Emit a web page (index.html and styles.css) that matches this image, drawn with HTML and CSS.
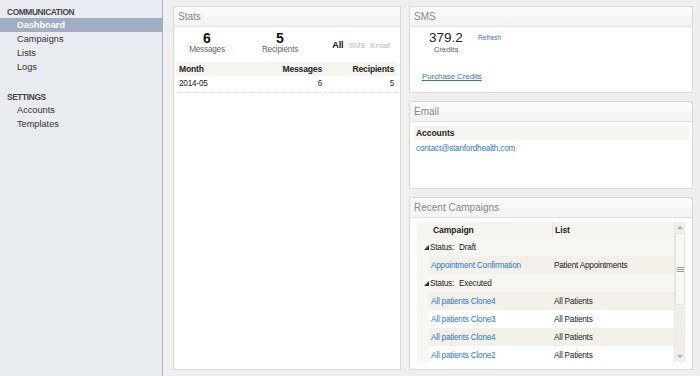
FILE: index.html
```html
<!DOCTYPE html>
<html lang="en">
<head>
    <meta charset="UTF-8">
    <title>Dashboard</title>
    <link rel="stylesheet" href="styles.css">
</head>
<body>
    <div class="app">
        <nav class="sidebar">
            <div class="nav-group">
                <div class="nav-title">Communication</div>
                <a class="nav-item active" href="#">Dashboard</a>
                <a class="nav-item" href="#">Campaigns</a>
                <a class="nav-item" href="#">Lists</a>
                <a class="nav-item" href="#">Logs</a>
            </div>
            <div class="nav-group">
                <div class="nav-title">Settings</div>
                <a class="nav-item" href="#">Accounts</a>
                <a class="nav-item" href="#">Templates</a>
            </div>
        </nav>

        <main class="main">
            <section class="panel stats">
                <div class="panel-head">Stats</div>
                <div class="stat-row">
                    <div class="stat">
                        <div class="stat-num">6</div>
                        <div class="stat-label">Messages</div>
                    </div>
                    <div class="stat">
                        <div class="stat-num">5</div>
                        <div class="stat-label">Recipients</div>
                    </div>
                    <div class="filters">
                        <span class="filter current">All</span>
                        <span class="filter">SMS</span>
                        <span class="filter">Email</span>
                    </div>
                </div>
                <table class="stats-table">
                    <colgroup>
                        <col class="col-month">
                        <col class="col-msg">
                        <col class="col-rec">
                    </colgroup>
                    <thead>
                        <tr>
                            <th>Month</th>
                            <th class="num">Messages</th>
                            <th class="num">Recipients</th>
                        </tr>
                    </thead>
                    <tbody>
                        <tr>
                            <td>2014-05</td>
                            <td class="num">6</td>
                            <td class="num">5</td>
                        </tr>
                    </tbody>
                </table>
            </section>

            <div class="side-col">
                <section class="panel sms">
                    <div class="panel-head">SMS</div>
                    <div class="credit-row">
                        <div class="credit">
                            <div class="credit-num">379.2</div>
                            <div class="credit-label">Credits</div>
                        </div>
                        <a class="refresh" href="#">Refresh</a>
                    </div>
                    <a class="purchase" href="#">Purchase Credits</a>
                </section>

                <section class="panel email">
                    <div class="panel-head">Email</div>
                    <div class="accounts-head">Accounts</div>
                    <a class="account-link" href="#">contact@stanfordhealth.com</a>
                </section>

                <section class="panel recent">
                    <div class="panel-head">Recent Campaigns</div>
                    <div class="grid">
                        <div class="grid-body">
                            <div class="grid-head">
                                <div class="cell-campaign">Campaign</div>
                                <div class="cell-list">List</div>
                            </div>
                            <div class="group-row"><span class="caret"></span>Status:<span class="group-val">Draft</span></div>
                            <div class="data-row alt">
                                <a class="cell-campaign" href="#">Appointment Confirmation</a>
                                <div class="cell-list">Patient Appointments</div>
                            </div>
                            <div class="group-row"><span class="caret"></span>Status:<span class="group-val">Executed</span></div>
                            <div class="data-row alt">
                                <a class="cell-campaign" href="#">All patients Clone4</a>
                                <div class="cell-list">All Patients</div>
                            </div>
                            <div class="data-row">
                                <a class="cell-campaign" href="#">All patients Clone3</a>
                                <div class="cell-list">All Patients</div>
                            </div>
                            <div class="data-row alt">
                                <a class="cell-campaign" href="#">All patients Clone4</a>
                                <div class="cell-list">All Patients</div>
                            </div>
                            <div class="data-row">
                                <a class="cell-campaign" href="#">All patients Clone2</a>
                                <div class="cell-list">All Patients</div>
                            </div>
                        </div>
                        <div class="scrollbar">
                            <div class="sb-btn"><span class="arrow-up"></span></div>
                            <div class="sb-thumb"><span class="grip"></span></div>
                            <div class="sb-track"></div>
                            <div class="sb-btn"><span class="arrow-down"></span></div>
                        </div>
                    </div>
                </section>
            </div>
        </main>
    </div>
</body>
</html>
```

FILE: styles.css
```css
* {
    box-sizing: border-box;
}

body {
    margin: 0;
    font-family: "Liberation Sans", Arial, sans-serif;
    color: #222;
}

a {
    text-decoration: none;
}

.app {
    display: flex;
    height: 376px;
    overflow: hidden;
}

/* sidebar */

.sidebar {
    width: 163px;
    flex-shrink: 0;
    background: #e8ebf0;
    border-right: 1px solid #a9adb6;
}

.nav-group {
    padding-top: 7px;
}

.nav-group + .nav-group {
    margin-top: 11px;
}

.nav-title {
    padding-left: 7px;
    font-size: 8.4px;
    line-height: 11px;
    font-weight: bold;
    letter-spacing: -0.4px;
    text-transform: uppercase;
    color: #474747;
}

.nav-item {
    display: block;
    height: 14px;
    padding-left: 17px;
    font-size: 9.2px;
    line-height: 14px;
    color: #333;
}

.nav-item.active {
    background: #a0adc3;
    color: #fff;
    font-weight: bold;
}

/* main */

.main {
    flex: 1;
    display: flex;
    gap: 8px;
    padding: 6px 7px 6px 10px;
    background: #efefef;
}

.panel {
    display: flex;
    flex-direction: column;
    background: #fff;
    border: 1px solid #dadada;
}

.panel-head {
    flex-shrink: 0;
    height: 20px;
    padding-left: 4px;
    font-size: 10px;
    line-height: 19px;
    color: #8a8a8a;
    background: linear-gradient(#fcfcfc, #f2f2f2);
    border-bottom: 1px solid #e3e3e3;
}

.stats {
    width: 228px;
}

.side-col {
    flex: 1;
    display: flex;
    flex-direction: column;
    gap: 8px;
}

.sms {
    height: 87px;
}

.email {
    height: 88px;
}

.recent {
    flex: 1;
}

/* stats */

.stat-row {
    display: flex;
    gap: 7px;
    height: 35px;
    padding: 4px 10px 0 0;
}

.stat {
    width: 66px;
    text-align: center;
}

.stat-num {
    font-size: 14px;
    line-height: 14px;
    font-weight: bold;
    color: #111;
}

.stat-label {
    font-size: 8.2px;
    letter-spacing: -0.2px;
    line-height: 10px;
    color: #666;
}

.filters {
    margin-left: auto;
    margin-top: 9px;
    display: flex;
    align-items: baseline;
    gap: 5px;
    height: 10px;
    line-height: 10px;
}

.filter {
    font-size: 8px;
    letter-spacing: -0.1px;
    color: #bbb;
}

.filter.current {
    font-size: 9px;
    font-weight: bold;
    color: #111;
}

.stats-table {
    width: 221px;
    margin: 0 2px;
    border-collapse: collapse;
    font-size: 8.2px;
    letter-spacing: -0.2px;
}

.col-month {
    width: 79px;
}

.col-msg {
    width: 70px;
}

.stats-table th {
    height: 14px;
    padding: 0 3px;
    background: #f6f4ee;
    font-size: 8.6px;
    text-align: left;
}

.stats-table td {
    height: 16px;
    padding: 0 3px;
    border-bottom: 1px dotted #e4e4e4;
}

.stats-table .num {
    text-align: right;
}

/* sms */

.credit-row {
    display: flex;
    align-items: flex-start;
    padding: 4px 0 0 10px;
}

.credit {
    width: 52px;
    text-align: center;
}

.credit-num {
    font-size: 13.5px;
    line-height: 14px;
    color: #222;
}

.credit-label {
    font-size: 7.8px;
    line-height: 10px;
    color: #666;
}

.refresh {
    margin: 2px 0 0 6px;
    font-size: 6.6px;
    line-height: 10px;
    color: #3d6fd6;
}

.purchase {
    align-self: flex-start;
    margin: 17px 0 0 12px;
    font-size: 8px;
    letter-spacing: -0.1px;
    line-height: 10px;
    color: #3d6fd6;
    text-decoration: underline;
}

/* email */

.accounts-head {
    height: 14px;
    margin: 4px 3px 0 4px;
    padding-left: 2px;
    background: #f6f4ee;
    font-size: 8.6px;
    letter-spacing: -0.1px;
    line-height: 14px;
    font-weight: bold;
}

.account-link {
    display: block;
    padding-left: 6px;
    font-size: 8.2px;
    letter-spacing: -0.2px;
    line-height: 18px;
    color: #2a7ad5;
}

/* recent campaigns */

.grid {
    display: flex;
    height: 140px;
    margin: 4px 7px 0 7px;
    overflow: hidden;
    background: #f7f6f1;
    font-size: 8.2px;
    letter-spacing: -0.2px;
}

.grid-body {
    flex: 1;
}

.grid-head {
    display: flex;
    align-items: center;
    height: 16px;
    padding-left: 12px;
    background: #f6f4ee;
    font-size: 8.6px;
    letter-spacing: -0.1px;
    font-weight: bold;
}

.grid-head .cell-campaign {
    padding-left: 4px;
}

.grid-head .cell-list {
    border-left: 1px solid #e6e4dc;
    line-height: 16px;
}

.cell-campaign {
    width: 123px;
    flex-shrink: 0;
    padding-left: 2px;
}

.cell-list {
    flex: 1;
    padding-left: 2px;
    color: #222;
}

a.cell-campaign {
    color: #2a7ad5;
}

.group-row {
    display: flex;
    align-items: center;
    height: 18px;
    padding-left: 7px;
    color: #222;
}

.caret {
    width: 0;
    height: 0;
    margin-right: 1px;
    border-left: 5px solid transparent;
    border-bottom: 5px solid #333;
}

.group-val {
    margin-left: 5px;
}

.data-row {
    display: flex;
    align-items: center;
    height: 18px;
    margin-left: 12px;
    background: #fff;
}

.data-row.alt {
    background: #f2f0e8;
}

.scrollbar {
    width: 11px;
    display: flex;
    flex-direction: column;
    background: #f0eee6;
    border-left: 1px solid #e9e7e0;
}

.sb-btn {
    height: 11px;
    display: flex;
    align-items: center;
    justify-content: center;
}

.arrow-up,
.arrow-down {
    width: 0;
    height: 0;
    border-left: 3px solid transparent;
    border-right: 3px solid transparent;
}

.arrow-up {
    border-bottom: 3px solid #a8a8a8;
}

.arrow-down {
    border-top: 3px solid #a8a8a8;
}

.sb-thumb {
    height: 72px;
    display: flex;
    align-items: center;
    justify-content: center;
    background: #f8f7f3;
    border: 1px solid #e6e4dc;
}

.grip {
    width: 7px;
    height: 5px;
    background: repeating-linear-gradient(#9c9c9c 0 1px, transparent 1px 2px);
}

.sb-track {
    flex: 1;
}
```
